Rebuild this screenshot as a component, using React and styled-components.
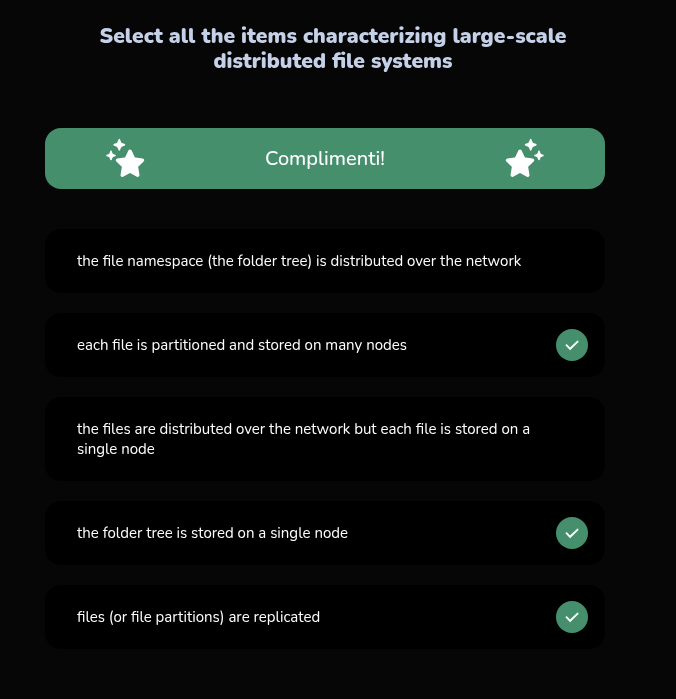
import React from "react";
import styled, { createGlobalStyle } from "styled-components";

const GlobalStyle = createGlobalStyle`
  * { box-sizing: border-box; }
  body {
    margin: 0;
    background: #060606;
    color: #fff;
    font-family: Nunito, "Noto Sans", sans-serif;
    -webkit-font-smoothing: antialiased;
  }
`;

const Page = styled.main`
  display: flex;
  flex-direction: column;
  width: 560px;
  margin-left: 45px;
  padding-top: 24px;
  height: 699px;
  will-change: transform;
`;

const Title = styled.h1`
  margin: 0;
  height: 104px;
  padding: 0 32px 0 48px;
  text-align: center;
  font-size: 21px;
  line-height: 25px;
  font-weight: 900;
  color: #c5d1e8;
`;

const Banner = styled.section`
  display: flex;
  align-items: center;
  justify-content: space-between;
  height: 61px;
  padding: 0 60px;
  border-radius: 16px;
  background: #468f6d;
`;

const Stars = styled.svg`
  width: 40px;
  height: 40px;
  margin-bottom: 1px;
  fill: #fff;
  transform: ${(p) => (p.$mirrored ? "scaleX(-1)" : "none")};
`;

const Message = styled.p`
  margin: 0;
  font-size: 20px;
  line-height: 26px;
  font-weight: 500;
`;

const Options = styled.ul`
  display: flex;
  flex-direction: column;
  gap: 20px;
  margin: 40px 0 0;
  padding: 0;
  list-style: none;
`;

const Option = styled.li`
  display: flex;
  align-items: center;
  justify-content: space-between;
  gap: 24px;
  min-height: 64px;
  padding: 16px 17px 16px 32px;
  border-radius: 16px;
  background: #000;
`;

const Label = styled.div`
  max-width: 460px;
  padding: 6px 0;
  font-size: 15px;
  line-height: 20px;
`;

const Badge = styled.span`
  display: grid;
  place-items: center;
  width: 32px;
  height: 32px;
  border-radius: 50%;
  background: #468f6d;
`;

const Celebration = ({ mirrored }) => (
  <Stars viewBox="0 0 40 40" $mirrored={mirrored} aria-hidden="true">
    <path
      d="M25 13.3l3.7 7.7 8.7 1.3-6.2 6 1.5 8.8-7.7-4.1-7.7 4.1 1.5-8.8-6.2-6 8.7-1.3Z"
      stroke="#fff"
      strokeWidth="3.6"
      strokeLinejoin="round"
    />
    <path d="M14.3 .8q.9 0 1.1 1.6.6 2.7 3.2 3.2 1.7.3 1.7 1.2t-1.7 1.2q-2.6.5-3.2 3.1-.2 1.7-1.1 1.7t-1.1-1.7q-.6-2.6-3.2-3.1-1.7-.3-1.7-1.2t1.7-1.2q2.6-.5 3.2-3.2.2-1.6 1.1-1.6Z" />
    <path d="M6 12.6q.8 0 1 1.4.4 2.1 2.3 2.5 1.5.2 1.5 1t-1.5 1q-1.9.4-2.3 2.4-.2 1.4-1 1.4t-1-1.4q-.4-2-2.3-2.4-1.5-.2-1.5-1t1.5-1q1.9-.4 2.3-2.5.2-1.4 1-1.4Z" />
  </Stars>
);

const Check = () => (
  <svg width="16" height="16" viewBox="0 0 16 16" fill="none" aria-hidden="true">
    <path
      d="M2.5 8.2 6.1 11.8 13.6 4.6"
      stroke="#fff"
      strokeWidth="1.9"
      strokeLinecap="round"
    />
  </svg>
);

const answers = [
  { text: "the file namespace (the folder tree) is distributed over the network" },
  { text: "each file is partitioned and stored on many nodes", correct: true },
  { text: "the files are distributed over the network but each file is stored on a single node" },
  { text: "the folder tree is stored on a single node", correct: true },
  { text: "files (or file partitions) are replicated", correct: true },
];

export default function App() {
  return (
    <>
      <GlobalStyle />
      <Page>
        <Title>Select all the items characterizing large-scale distributed file systems</Title>
        <Banner>
          <Celebration />
          <Message>Complimenti!</Message>
          <Celebration mirrored />
        </Banner>
        <Options>
          {answers.map(({ text, correct }) => (
            <Option key={text}>
              <Label>{text}</Label>
              {correct && <Badge><Check /></Badge>}
            </Option>
          ))}
        </Options>
      </Page>
    </>
  );
}
